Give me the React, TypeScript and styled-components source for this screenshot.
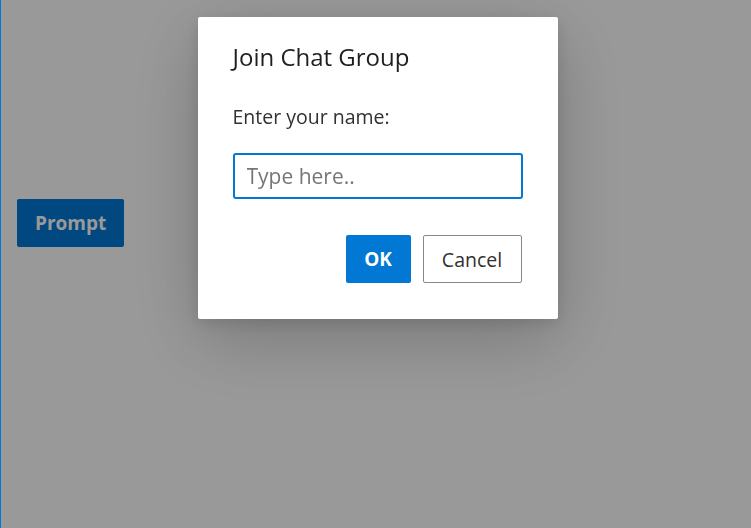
import React from 'react';
import styled, { createGlobalStyle } from 'styled-components';

const GlobalStyle = createGlobalStyle`
  html, body {
    margin: 0;
    padding: 0;
    height: 100%;
    background: #ffffff;
  }
  #root {
    height: 100%;
  }
  * {
    box-sizing: border-box;
  }
`;

const Page = styled.div`
  height: 100%;
  border-left: 1px solid #0078d4;
  display: flex;
  align-items: flex-start;
  padding: 199px 0 0 16px;
  font-family: 'Open Sans', 'Noto Sans', sans-serif;
`;

const PrimaryButton = styled.button<{ $wide?: boolean }>`
  height: 48px;
  padding: 0 ${({ $wide }) => ($wide ? '18px' : '14px')};
  background: #0078d4;
  color: #ffffff;
  border: none;
  border-radius: 2px;
  font-family: inherit;
  font-size: 19px;
  font-weight: 700;
  cursor: pointer;
`;

const Overlay = styled.div`
  position: fixed;
  inset: 0 0 0 1px;
  background: rgba(0, 0, 0, 0.4);
  display: flex;
  justify-content: center;
  align-items: flex-start;
  padding: 17px 0 0 3px;
`;

const Dialog = styled.div`
  width: 360px;
  height: 302px;
  background: #ffffff;
  border-radius: 2px;
  box-shadow: 0 20px 70px rgba(0, 0, 0, 0.22), 0 4px 16px rgba(0, 0, 0, 0.12);
  padding: 24px 35px 0 35px;
  display: flex;
  flex-direction: column;
  font-family: 'Open Sans', 'Noto Sans', sans-serif;
`;

const Title = styled.h2`
  margin: 0;
  font-size: 24px;
  font-weight: 500;
  line-height: 32px;
  color: #201f1e;
`;

const Label = styled.label`
  margin-top: 31px;
  font-size: 19.5px;
  line-height: 26px;
  color: #323130;
`;

const NameInput = styled.input`
  margin-top: 23px;
  height: 46px;
  width: 290px;
  border: 2px solid #0078d4;
  border-radius: 3px;
  padding: 0 12px;
  font-family: inherit;
  font-size: 21px;
  color: #323130;
  outline: none;
  &::placeholder {
    color: #767676;
  }
`;

const Actions = styled.div`
  margin-top: 36px;
  display: flex;
  justify-content: flex-end;
  gap: 12px;
  padding-right: 1px;
`;

const SecondaryButton = styled.button`
  height: 48px;
  width: 99px;
  background: #ffffff;
  color: #323130;
  border: 1px solid #8a8886;
  border-radius: 2px;
  font-family: inherit;
  font-size: 19.5px;
  font-weight: 500;
  cursor: pointer;
`;

const OkButton = styled(PrimaryButton)`
  width: 65px;
  padding: 0;
`;

export default function App() {
  return (
    <>
      <GlobalStyle />
      <Page>
        <PrimaryButton $wide>Prompt</PrimaryButton>
      </Page>
      <Overlay>
        <Dialog role="dialog">
          <Title>Join Chat Group</Title>
          <Label htmlFor="name">Enter your name:</Label>
          <NameInput id="name" placeholder="Type here.." autoFocus />
          <Actions>
            <OkButton>OK</OkButton>
            <SecondaryButton>Cancel</SecondaryButton>
          </Actions>
        </Dialog>
      </Overlay>
    </>
  );
}
